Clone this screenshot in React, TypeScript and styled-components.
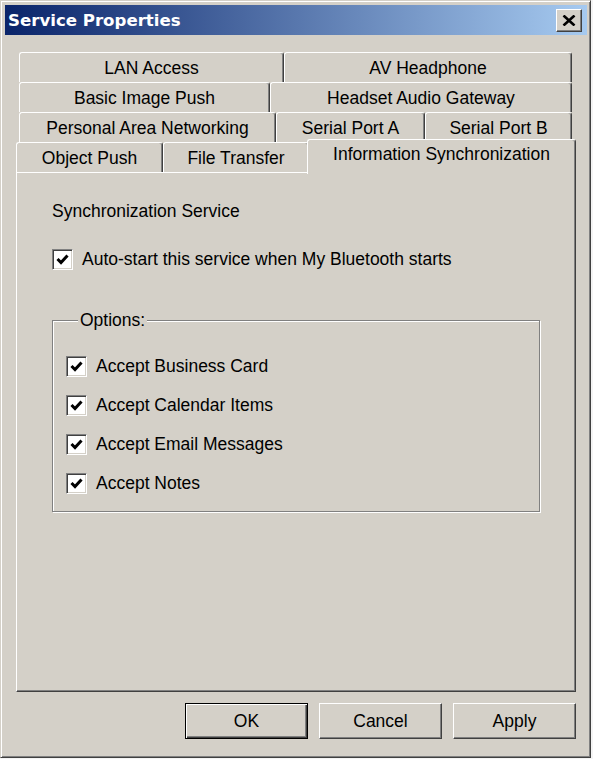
import React from 'react'
import styled, { createGlobalStyle } from 'styled-components'

const GlobalStyle = createGlobalStyle`
  html, body {
    margin: 0;
    padding: 0;
    background: #f4f4f4;
  }
  body {
    font-family: 'Liberation Sans', Arial, sans-serif;
    color: #000;
  }
`

const Window = styled.div`
  box-sizing: border-box;
  width: 591px;
  height: 758px;
  background: #d4d0c8;
  border: 1px solid;
  border-color: #d4d0c8 #404040 #404040 #d4d0c8;
  box-shadow: inset 1px 1px 0 #fff, inset -1px -1px 0 #808080;
  padding: 4px 3px 3px 4px;
`

const TitleBar = styled.div`
  height: 30px;
  display: flex;
  align-items: center;
  justify-content: space-between;
  padding: 0 5px 0 3px;
  background: linear-gradient(to right, #0a246a, #a6caf0);
`

const Title = styled.span`
  font-family: 'DejaVu Sans', Verdana, sans-serif;
  font-weight: bold;
  font-size: 16.6px;
  color: #fff;
`

const CloseButton = styled.div`
  box-sizing: border-box;
  width: 26px;
  height: 23px;
  display: flex;
  align-items: center;
  justify-content: center;
  background: #d4d0c8;
  border: 1px solid;
  border-color: #fff #404040 #404040 #fff;
  box-shadow: inset -1px -1px 0 #808080;
`

const Body = styled.div`
  padding: 17px 11px 0;
`

const TabRows = styled.div`
  display: flex;
  flex-direction: column;
`

const TabRow = styled.div<{ $front?: boolean }>`
  display: flex;
  align-items: flex-end;
  height: 30px;
  padding: ${p => (p.$front ? '0' : '0 4px 0 3px')};
`

const Tab = styled.div<{ $w: number; $active?: boolean }>`
  box-sizing: border-box;
  flex: 0 0 ${p => p.$w}px;
  height: ${p => (p.$active ? 35 : 30)}px;
  margin: ${p => (p.$active ? '0 0 -2px -2px' : '0')};
  z-index: ${p => (p.$active ? 1 : 0)};
  display: flex;
  align-items: center;
  justify-content: center;
  padding-top: ${p => (p.$active ? 0 : 2)}px;
  padding-bottom: ${p => (p.$active ? 5 : 0)}px;
  background: #d4d0c8;
  border-top: 1px solid #fff;
  border-left: 1px solid #fff;
  border-right: 1px solid #404040;
  border-radius: 3px 3px 0 0;
  box-shadow: inset -1px 0 0 #808080;
  font-size: 17.5px;
  white-space: nowrap;
`

const Panel = styled.div`
  box-sizing: border-box;
  height: 520px;
  border: 1px solid;
  border-color: #fff #404040 #404040 #fff;
  box-shadow: inset -1px -1px 0 #808080;
  padding: 28px 35px 0 35px;
`

const Heading = styled.div`
  font-size: 17.5px;
  line-height: 20px;
`

const CheckRow = styled.label<{ $top: number }>`
  display: flex;
  align-items: center;
  gap: 9px;
  height: 22px;
  margin-top: ${p => p.$top}px;
  font-size: 17.5px;
`

const Box = styled.span`
  box-sizing: border-box;
  width: 21px;
  height: 21px;
  display: flex;
  align-items: center;
  justify-content: center;
  background: #fff;
  border: 1px solid;
  border-color: #808080 #fff #fff #808080;
  box-shadow: inset 1px 1px 0 #404040, inset -1px -1px 0 #d4d0c8;
`

const GroupBox = styled.div`
  box-sizing: border-box;
  height: 192px;
  margin-top: 50px;
  border: 1px solid #808080;
  box-shadow: inset 1px 1px 0 #fff, 1px 1px 0 #fff;
  padding: 0 13px;
`

const GroupLabel = styled.div`
  display: table;
  margin: -11px 0 0 12px;
  padding: 0 2px;
  background: #d4d0c8;
  font-size: 17.5px;
  line-height: 20px;
`

const OptionList = styled.div`
  display: flex;
  flex-direction: column;
  gap: 17px;
  margin-top: 25px;
`

const ButtonRow = styled.div`
  display: flex;
  justify-content: flex-end;
  gap: 11px;
  margin-top: 11px;
`

const Button = styled.div<{ $default?: boolean }>`
  box-sizing: border-box;
  width: 123px;
  height: 36px;
  display: flex;
  align-items: center;
  justify-content: center;
  font-size: 17.5px;
  background: #d4d0c8;
  border: 1px solid;
  border-color: ${p => (p.$default ? '#000' : '#fff #404040 #404040 #fff')};
  box-shadow: ${p =>
    p.$default
      ? 'inset 1px 1px 0 #fff, inset -1px -1px 0 #404040, inset -2px -2px 0 #808080'
      : 'inset -1px -1px 0 #808080'};
`

const Check: React.FC<{ label: string; top?: number }> = ({ label, top = 0 }) => (
  <CheckRow $top={top}>
    <Box>
      <svg width="13" height="11" viewBox="0 0 13 11">
        <path d="M1.5 5 L5 8.5 L11.5 1.5" fill="none" stroke="#000" strokeWidth="3" />
      </svg>
    </Box>
    {label}
  </CheckRow>
)

const rows: { label: string; w: number }[][] = [
  [
    { label: 'LAN Access', w: 265 },
    { label: 'AV Headphone', w: 288 },
  ],
  [
    { label: 'Basic Image Push', w: 251 },
    { label: 'Headset Audio Gateway', w: 302 },
  ],
  [
    { label: 'Personal Area Networking', w: 257 },
    { label: 'Serial Port A', w: 149 },
    { label: 'Serial Port B', w: 147 },
  ],
]

const options = ['Accept Business Card', 'Accept Calendar Items', 'Accept Email Messages', 'Accept Notes']

const App: React.FC = () => (
  <>
    <GlobalStyle />
    <Window>
      <TitleBar>
        <Title>Service Properties</Title>
        <CloseButton>
          <svg width="14" height="11" viewBox="0 0 14 11">
            <path d="M1.5 0.5 L12.5 10.5 M12.5 0.5 L1.5 10.5" stroke="#000" strokeWidth="2.6" />
          </svg>
        </CloseButton>
      </TitleBar>
      <Body>
        <TabRows>
          {rows.map((row, i) => (
            <TabRow key={i}>
              {row.map(t => (
                <Tab key={t.label} $w={t.w}>
                  {t.label}
                </Tab>
              ))}
            </TabRow>
          ))}
          <TabRow $front>
            <Tab $w={147}>Object Push</Tab>
            <Tab $w={146}>File Transfer</Tab>
            <Tab $w={269} $active>
              Information Synchronization
            </Tab>
          </TabRow>
        </TabRows>
        <Panel>
          <Heading>Synchronization Service</Heading>
          <Check top={27} label="Auto-start this service when My Bluetooth starts" />
          <GroupBox>
            <GroupLabel>Options:</GroupLabel>
            <OptionList>
              {options.map(o => (
                <Check key={o} label={o} />
              ))}
            </OptionList>
          </GroupBox>
        </Panel>
        <ButtonRow>
          <Button $default>OK</Button>
          <Button>Cancel</Button>
          <Button>Apply</Button>
        </ButtonRow>
      </Body>
    </Window>
  </>
)

export default App
